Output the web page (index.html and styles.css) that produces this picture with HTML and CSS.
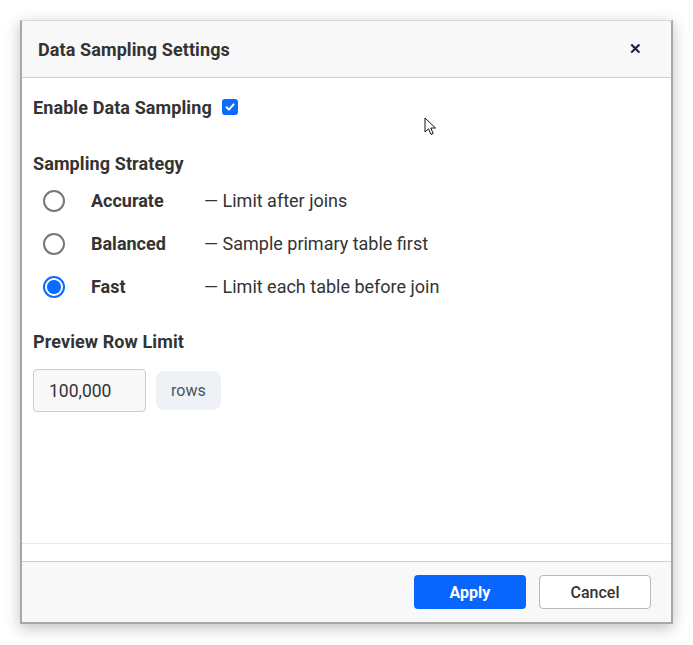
FILE: index.html
```html
<!DOCTYPE html>
<html lang="en">
<head>
    <meta charset="UTF-8">
    <meta name="viewport" content="width=device-width, initial-scale=1.0">
    <title>Data Sampling Settings</title>
    <link rel="stylesheet" href="styles.css">
</head>
<body>
    <div class="dialog">
        <div class="dialog-header">
            <h2>Data Sampling Settings</h2>
            <span class="close-btn">&#x2715;</span>
        </div>
        <div class="dialog-body">
            <label class="enable-row">
                <span>Enable Data Sampling</span>
                <span class="checkbox">
                    <svg width="12" height="12" viewBox="0 0 12 12"><path d="M2.5 6.2 L5 8.6 L9.6 3.4" fill="none" stroke="#fff" stroke-width="2" stroke-linecap="round" stroke-linejoin="round"/></svg>
                </span>
            </label>

            <h3 class="section-title">Sampling Strategy</h3>
            <div class="radio-list">
                <div class="radio-row">
                    <span class="radio"></span>
                    <span class="radio-label">Accurate</span>
                    <span class="radio-desc">— Limit after joins</span>
                </div>
                <div class="radio-row">
                    <span class="radio"></span>
                    <span class="radio-label">Balanced</span>
                    <span class="radio-desc">— Sample primary table first</span>
                </div>
                <div class="radio-row">
                    <span class="radio checked"></span>
                    <span class="radio-label">Fast</span>
                    <span class="radio-desc">— Limit each table before join</span>
                </div>
            </div>

            <h3 class="section-title preview-title">Preview Row Limit</h3>
            <div class="limit-row">
                <div class="limit-input">100,000</div>
                <span class="unit">rows</span>
            </div>
        </div>
        <div class="body-end"></div>
        <div class="dialog-footer">
            <button class="btn btn-primary">Apply</button>
            <button class="btn btn-secondary">Cancel</button>
        </div>
        <svg class="cursor" width="14" height="20" viewBox="0 0 14 20"><path d="M1 1 L1 15 L4.5 11.8 L7 17.5 L9.2 16.5 L6.8 11 L11.5 11 Z" fill="#fff" stroke="#111" stroke-width="1"/></svg>
    </div>
</body>
</html>
```

FILE: styles.css
```css
body {
    margin: 0;
    padding: 20px;
    font-family: Roboto, "Liberation Sans", sans-serif;
    color: #333;
    background: #fff;
}
.dialog {
    position: relative;
    width: 649px;
    height: 601px;
    display: flex;
    flex-direction: column;
    background: #fff;
    border: 2px solid #a8a8a8;
    border-top: 1px solid #d8d8d8;
    box-shadow: 0 4px 14px rgba(0, 0, 0, 0.25);
}
.dialog-header {
    height: 56px;
    display: flex;
    align-items: center;
    justify-content: space-between;
    padding: 0 29px 0 16px;
    background: #f8f8f8;
    border-bottom: 1px solid #cfcfcf;
}
.dialog-header h2 {
    margin: 0;
    font-size: 18px;
    font-weight: 700;
    letter-spacing: 0.1px;
    color: #333;
}
.close-btn {
    font-size: 15px;
    font-weight: 600;
    color: #222;
}
.dialog-body {
    flex: 1;
    padding: 17px 11px 0;
}
.enable-row {
    display: flex;
    align-items: center;
    gap: 10px;
    font-size: 18px;
    font-weight: 700;
    letter-spacing: 0.1px;
    height: 24px;
}
.checkbox {
    width: 16px;
    height: 16px;
    border-radius: 3px;
    background: #0a6cff;
    display: flex;
    align-items: center;
    justify-content: center;
}
.section-title {
    margin: 33px 0 0;
    font-size: 18px;
    font-weight: 700;
    letter-spacing: 0.1px;
    height: 24px;
    line-height: 24px;
}
.radio-list {
    display: flex;
    flex-direction: column;
    margin-top: 3px;
}
.radio-row {
    display: flex;
    align-items: center;
    height: 43px;
    padding-left: 10px;
    font-size: 18px;
}
.radio {
    width: 22px;
    height: 22px;
    box-sizing: border-box;
    border: 2px solid #777;
    border-radius: 50%;
    margin-right: 26px;
}
.radio.checked {
    border-color: #0a6cff;
    background: radial-gradient(circle, #0a6cff 0 6.5px, #fff 7.5px);
}
.radio-label {
    width: 113px;
    font-weight: 700;
}
.radio-desc {
    color: #333;
}
.preview-title {
    margin-top: 22px;
}
.limit-row {
    display: flex;
    align-items: center;
    gap: 10px;
    margin-top: 15px;
}
.limit-input {
    width: 113px;
    height: 43px;
    box-sizing: border-box;
    padding-left: 15px;
    display: flex;
    align-items: center;
    font-size: 17.5px;
    background: #f8f8f8;
    border: 1px solid #cccccc;
    border-radius: 4px;
}
.unit {
    height: 39px;
    padding: 0 15px;
    display: flex;
    align-items: center;
    font-size: 16px;
    color: #4a5260;
    background: #eef2f7;
    border-radius: 8px;
}
.body-end {
    height: 17px;
    border-top: 1px solid #e6eaef;
}
.dialog-footer {
    height: 60px;
    display: flex;
    align-items: center;
    justify-content: flex-end;
    gap: 13px;
    padding-right: 20px;
    background: #f8f8f8;
    border-top: 1px solid #cfcfcf;
}
.btn {
    width: 112px;
    height: 34px;
    border-radius: 4px;
    font-family: Roboto, "Liberation Sans", sans-serif;
    font-size: 16px;
    font-weight: 700;
    cursor: pointer;
}
.btn-primary {
    background: #0866ff;
    color: #fff;
    border: none;
}
.btn-secondary {
    background: #fff;
    color: #333;
    font-weight: 500;
    border: 1px solid #b8b8b8;
}
.cursor {
    position: absolute;
    left: 402px;
    top: 96px;
}
```
